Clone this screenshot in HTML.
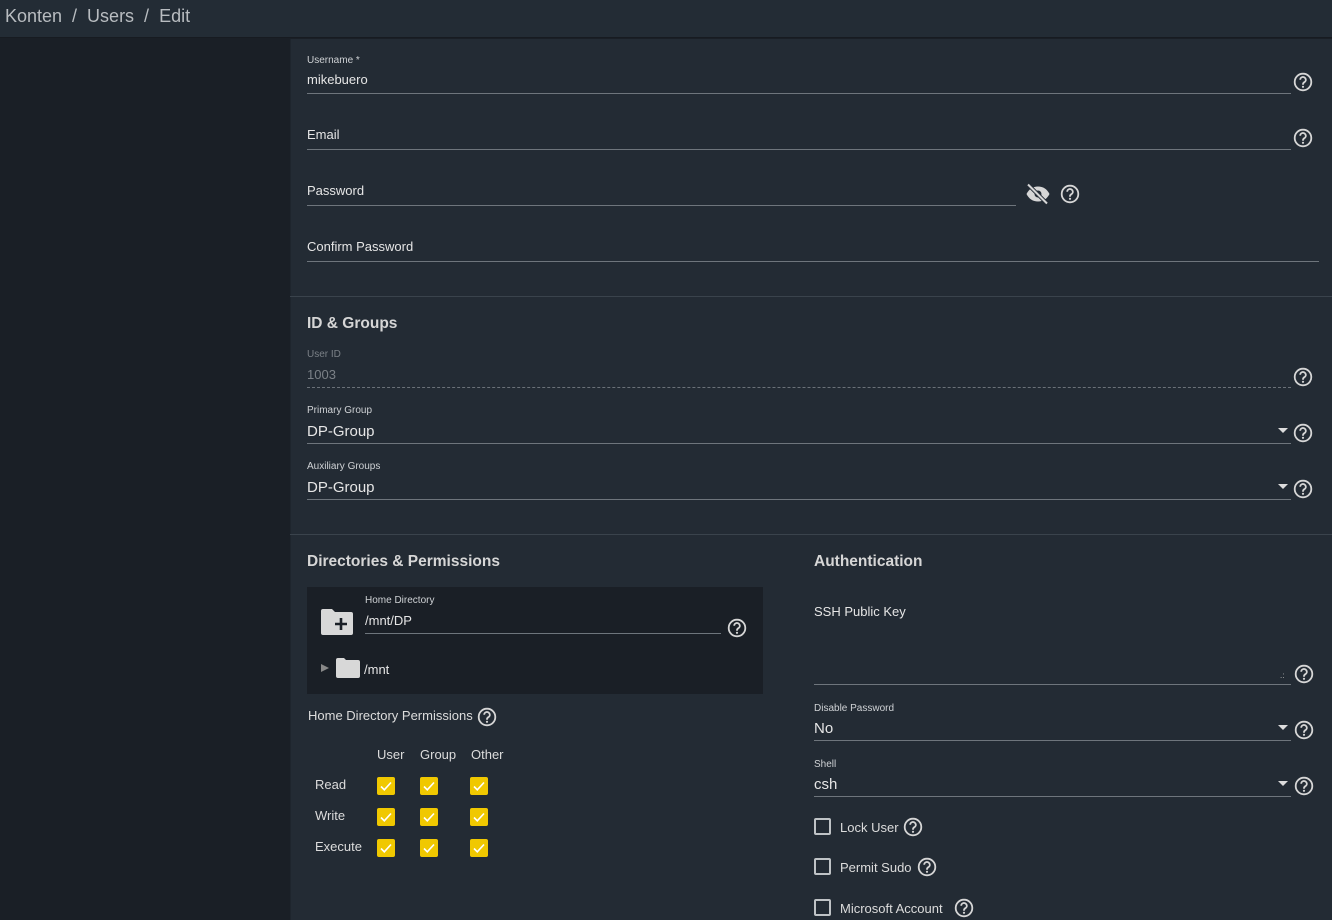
<!DOCTYPE html>
<html><head><meta charset="utf-8"><style>
*{margin:0;padding:0;box-sizing:border-box}
body{width:1332px;height:920px;overflow:hidden;background:#1a1f26;font-family:"Liberation Sans",sans-serif;color:#dcdcdc;position:relative}
.a{position:absolute}
.top{left:0;top:0;width:1332px;height:38px;background:#232c35;border-bottom:1px solid #171b21}
.crumb{left:5px;top:6px;font-size:18px;color:#b8bcc0}
.panel{left:290px;top:39px;width:1042px;height:881px;background:#232b34;border-left:1px solid #1e252d}
.lbl{font-size:10px;color:#cfd2d5}
.val{font-size:13px;color:#e6e6e6}
.big{font-size:15px;color:#e6e6e6}
.line{height:1px;background:#6e757c}
.sep{height:1px;background:#3a434c;left:290px;width:1042px}
.h{font-size:15.5px;font-weight:bold;color:#d6d6d6}
.hp{width:20px;height:20px}
.arrow{width:0;height:0;border-left:5px solid transparent;border-right:5px solid transparent;border-top:5px solid #ddd}
.cb{width:18px;height:18px;background:#f0c800;border-radius:2px}
.ucb{width:17px;height:17px;border:2px solid #bfc3c6;border-radius:2px}
.t13{font-size:13px;color:#dcdcdc}
</style></head><body>
<svg width="0" height="0" style="position:absolute"><defs>
<symbol id="q" viewBox="0 0 20 20"><circle cx="10" cy="10" r="8.3" fill="none" stroke="#d6d6d6" stroke-width="1.8"/><path d="M7.2 7.8a2.8 2.8 0 1 1 4.2 2.4c-.9.5-1.4 1-1.4 2v.6" fill="none" stroke="#d6d6d6" stroke-width="1.8"/><circle cx="10" cy="14.8" r="1.1" fill="#d6d6d6"/></symbol>
<symbol id="ck" viewBox="0 0 18 18"><path d="M4 9.5l3.3 3.3L14 5.5" fill="none" stroke="#fff" stroke-width="1.6"/></symbol>
</defs></svg>
<div class="a top"></div>
<div class="a crumb">Konten &nbsp;/ &nbsp;Users &nbsp;/ &nbsp;Edit</div>
<div class="a panel"></div>

<div class="a lbl" style="left:307px;top:55px">Username *</div>
<div class="a val" style="left:307px;top:72px">mikebuero</div>
<div class="a line" style="left:307px;top:93px;width:984px"></div>
<svg class="a hp" style="left:1293px;top:72px"><use href="#q"/></svg>

<div class="a val" style="left:307px;top:127px">Email</div>
<div class="a line" style="left:307px;top:149px;width:984px"></div>
<svg class="a hp" style="left:1293px;top:128px"><use href="#q"/></svg>

<div class="a val" style="left:307px;top:183px">Password</div>
<div class="a line" style="left:307px;top:205px;width:709px"></div>
<svg class="a" style="left:1025px;top:183px" width="26" height="22" viewBox="0 0 26 22"><path d="M1.5 11C4 6 8 3.5 13 3.5S22 6 24.5 11C22 16 18 18.5 13 18.5S4 16 1.5 11Z" fill="#d6d6d6"/><circle cx="13" cy="11" r="3.5" fill="#232b34"/><path d="M3 1.5L22 20.5" stroke="#232b34" stroke-width="4"/><path d="M3 1.5L22 20.5" stroke="#d6d6d6" stroke-width="2"/></svg>
<svg class="a hp" style="left:1060px;top:184px"><use href="#q"/></svg>

<div class="a val" style="left:307px;top:239px">Confirm Password</div>
<div class="a line" style="left:307px;top:261px;width:1012px"></div>

<div class="a sep" style="top:296px"></div>
<div class="a h" style="left:307px;top:315px">ID &amp; Groups</div>
<div class="a lbl" style="left:307px;top:349px;color:#7b8187">User ID</div>
<div class="a val" style="left:307px;top:367px;color:#7b8187">1003</div>
<div class="a" style="left:307px;top:387px;width:984px;border-top:1px dashed #6a7178"></div>
<svg class="a hp" style="left:1293px;top:367px"><use href="#q"/></svg>

<div class="a lbl" style="left:307px;top:405px">Primary Group</div>
<div class="a big" style="left:307px;top:423px">DP-Group</div>
<div class="a arrow" style="left:1278px;top:428px"></div>
<div class="a line" style="left:307px;top:443px;width:984px"></div>
<svg class="a hp" style="left:1293px;top:423px"><use href="#q"/></svg>

<div class="a lbl" style="left:307px;top:461px">Auxiliary Groups</div>
<div class="a big" style="left:307px;top:479px">DP-Group</div>
<div class="a arrow" style="left:1278px;top:484px"></div>
<div class="a line" style="left:307px;top:499px;width:984px"></div>
<svg class="a hp" style="left:1293px;top:479px"><use href="#q"/></svg>

<div class="a sep" style="top:534px"></div>
<div class="a h" style="left:307px;top:553px">Directories &amp; Permissions</div>
<div class="a h" style="left:814px;top:553px">Authentication</div>

<div class="a" style="left:307px;top:587px;width:456px;height:107px;background:#1a1f26"></div>
<svg class="a" style="left:320px;top:608px" width="34" height="28" viewBox="0 0 34 28"><path d="M1 3a2 2 0 0 1 2-2h9l3 3h16a2 2 0 0 1 2 2v19a2 2 0 0 1-2 2H3a2 2 0 0 1-2-2Z" fill="#d8d8d8"/><path d="M21 10v12M15 16h12" stroke="#1a1f26" stroke-width="2.6"/></svg>
<div class="a lbl" style="left:365px;top:595px">Home Directory</div>
<div class="a val" style="left:365px;top:613px">/mnt/DP</div>
<div class="a line" style="left:365px;top:633px;width:356px"></div>
<svg class="a hp" style="left:727px;top:618px"><use href="#q"/></svg>
<div class="a" style="left:321px;top:664px;width:0;height:0;border-top:4px solid transparent;border-bottom:4px solid transparent;border-left:8px solid #888"></div>
<svg class="a" style="left:336px;top:658px" width="24" height="20" viewBox="0 0 24 20"><path d="M0 2a2 2 0 0 1 2-2h6l2 2h12a2 2 0 0 1 2 2v14a2 2 0 0 1-2 2H2a2 2 0 0 1-2-2Z" fill="#d8d8d8"/></svg>
<div class="a val" style="left:364px;top:662px">/mnt</div>

<div class="a t13" style="left:308px;top:708px">Home Directory Permissions</div>
<svg class="a hp" style="left:477px;top:707px"><use href="#q"/></svg>
<div class="a t13" style="left:377px;top:747px">User</div>
<div class="a t13" style="left:420px;top:747px">Group</div>
<div class="a t13" style="left:471px;top:747px">Other</div>
<div class="a t13" style="left:315px;top:777px">Read</div>
<div class="a t13" style="left:315px;top:808px">Write</div>
<div class="a t13" style="left:315px;top:839px">Execute</div>
<svg class="a cb" style="left:377px;top:777px"><use href="#ck"/></svg>
<svg class="a cb" style="left:420px;top:777px"><use href="#ck"/></svg>
<svg class="a cb" style="left:470px;top:777px"><use href="#ck"/></svg>
<svg class="a cb" style="left:377px;top:808px"><use href="#ck"/></svg>
<svg class="a cb" style="left:420px;top:808px"><use href="#ck"/></svg>
<svg class="a cb" style="left:470px;top:808px"><use href="#ck"/></svg>
<svg class="a cb" style="left:377px;top:839px"><use href="#ck"/></svg>
<svg class="a cb" style="left:420px;top:839px"><use href="#ck"/></svg>
<svg class="a cb" style="left:470px;top:839px"><use href="#ck"/></svg>

<div class="a val" style="left:814px;top:604px">SSH Public Key</div>
<div class="a" style="left:1280px;top:672px;font-size:8px;color:#bbb;line-height:8px">.:</div>
<div class="a line" style="left:814px;top:684px;width:477px"></div>
<svg class="a hp" style="left:1294px;top:664px"><use href="#q"/></svg>

<div class="a lbl" style="left:814px;top:703px">Disable Password</div>
<div class="a big" style="left:814px;top:720px">No</div>
<div class="a arrow" style="left:1278px;top:725px"></div>
<div class="a line" style="left:814px;top:740px;width:477px"></div>
<svg class="a hp" style="left:1294px;top:720px"><use href="#q"/></svg>

<div class="a lbl" style="left:814px;top:759px">Shell</div>
<div class="a big" style="left:814px;top:776px">csh</div>
<div class="a arrow" style="left:1278px;top:781px"></div>
<div class="a line" style="left:814px;top:796px;width:477px"></div>
<svg class="a hp" style="left:1294px;top:776px"><use href="#q"/></svg>

<div class="a ucb" style="left:814px;top:818px"></div>
<div class="a t13" style="left:840px;top:820px">Lock User</div>
<svg class="a hp" style="left:903px;top:817px"><use href="#q"/></svg>
<div class="a ucb" style="left:814px;top:858px"></div>
<div class="a t13" style="left:840px;top:860px">Permit Sudo</div>
<svg class="a hp" style="left:917px;top:857px"><use href="#q"/></svg>
<div class="a ucb" style="left:814px;top:899px"></div>
<div class="a t13" style="left:840px;top:901px">Microsoft Account</div>
<svg class="a hp" style="left:954px;top:898px"><use href="#q"/></svg>
</body></html>
